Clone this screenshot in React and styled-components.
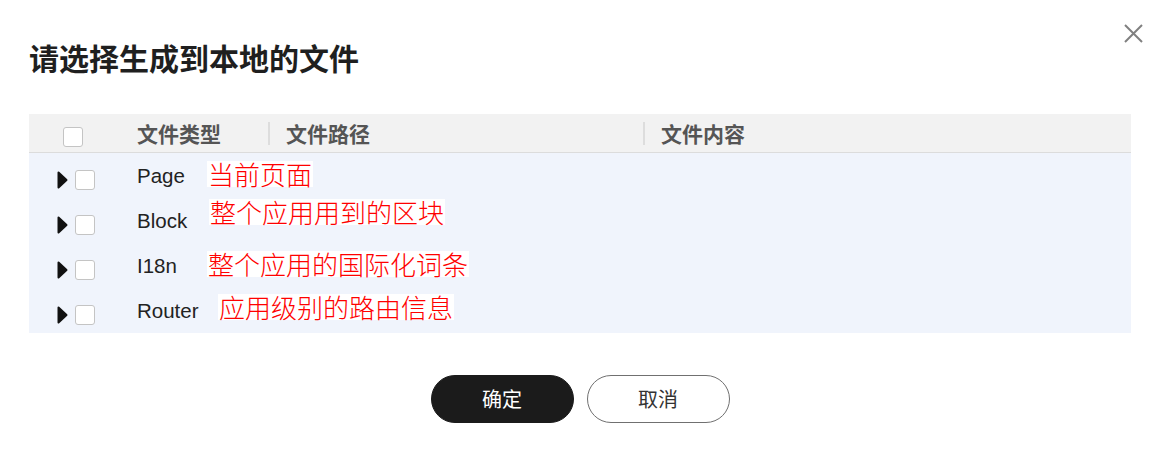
import React from 'react';
import styled, { createGlobalStyle } from 'styled-components';

const rows = [
  { type: 'Page', note: '当前页面', left: 178, top: 8 },
  { type: 'Block', note: '整个应用用到的区块', left: 180, top: 1 },
  { type: 'I18n', note: '整个应用的国际化词条', left: 178, top: 8 },
  { type: 'Router', note: '应用级别的路由信息', left: 189, top: 6 },
];

function App() {
  return (
    <>
      <GlobalStyle />
      <Dialog>
        <CloseButton aria-label="close">
          <svg width="19" height="19" viewBox="0 0 19 19">
            <path d="M1 1L18 18M18 1L1 18" stroke="#808080" strokeWidth="2" fill="none" />
          </svg>
        </CloseButton>
        <Title>请选择生成到本地的文件</Title>
        <Table>
          <HeadRow>
            <SelectHead>
              <Checkbox />
            </SelectHead>
            <HeadCell width="131px">文件类型</HeadCell>
            <HeadCell width="375px" divider>文件路径</HeadCell>
            <HeadCell divider>文件内容</HeadCell>
          </HeadRow>
          <Body>
            {rows.map(row =>
              <Row key={row.type}>
                <SelectCell>
                  <svg width="11" height="18" viewBox="0 0 11 18">
                    <path d="M1.5 1.5L9.5 9L1.5 16.5Z" fill="#111" stroke="#111" strokeWidth="2" strokeLinejoin="round" />
                  </svg>
                  <Checkbox />
                </SelectCell>
                <TypeCell>{row.type}</TypeCell>
                <Note left={row.left} top={row.top}>{row.note}</Note>
              </Row>
            )}
          </Body>
        </Table>
        <Footer>
          <Button primary>确定</Button>
          <Button>取消</Button>
        </Footer>
      </Dialog>
    </>
  );
}

export default App;

const GlobalStyle = createGlobalStyle`
  body {
    margin: 0;
    background: #fff;
    font-family: "Noto Sans CJK SC", "Noto Sans", sans-serif;
  }
`;

const Dialog = styled.div`
  position: relative;
  width: 1165px;
  box-sizing: border-box;
  padding: 36px 34px 26px 29px;
`;

const CloseButton = styled.button`
  all: unset;
  position: absolute;
  top: 24px;
  right: 22px;
  width: 19px;
  height: 19px;
  display: flex;
  cursor: pointer;
`;

const Title = styled.h1`
  margin: 0 0 36px;
  font-size: 30px;
  line-height: 42px;
  font-weight: 700;
  color: #1f1f1f;
`;

const Table = styled.div`
  width: 100%;
`;

const HeadRow = styled.div`
  display: flex;
  align-items: center;
  height: 38px;
  background: #f2f2f2;
  border-bottom: 1px solid #dcdcdc;
`;

const SelectHead = styled.div`
  width: 108px;
  flex-shrink: 0;
  box-sizing: border-box;
  padding: 8px 0 0 34px;
  display: flex;
  align-items: center;
`;

const HeadCell = styled.div`
  display: flex;
  align-items: center;
  width: ${p => p.width || 'auto'};
  flex: ${p => p.width ? '0 0 auto' : '1'};
  font-size: 21px;
  font-weight: 700;
  color: #555;
  &::before {
    content: '';
    display: ${p => p.divider ? 'block' : 'none'};
    width: 2px;
    height: 23px;
    margin-right: 16px;
    background: #dddddd;
  }
`;

const Checkbox = styled.span`
  display: inline-block;
  width: 20px;
  height: 20px;
  box-sizing: border-box;
  border: 1px solid #c4c4c4;
  border-radius: 3px;
  background: #fff;
`;

const Body = styled.div`
  background: #f0f4fc;
`;

const Row = styled.div`
  position: relative;
  display: flex;
  align-items: center;
  height: 45px;
`;

const SelectCell = styled.div`
  width: 108px;
  flex-shrink: 0;
  box-sizing: border-box;
  padding: 9px 0 0 28px;
  display: flex;
  align-items: center;
  gap: 7px;
`;

const TypeCell = styled.div`
  font-family: "Liberation Sans", Arial, sans-serif;
  font-size: 20.5px;
  color: #222;
`;

const Note = styled.span`
  position: absolute;
  left: ${p => p.left}px;
  top: ${p => p.top}px;
  padding: 0 1px;
  background: #fff;
  color: #ff0000;
  font-size: 26px;
  line-height: 26px;
  font-weight: 300;
  white-space: nowrap;
`;

const Footer = styled.div`
  display: flex;
  justify-content: center;
  gap: 13px;
  margin-top: 42px;
`;

const Button = styled.button`
  all: unset;
  box-sizing: border-box;
  width: 143px;
  height: 48px;
  border-radius: 24px;
  text-align: center;
  font-size: 20px;
  line-height: 46px;
  font-family: "Noto Sans CJK SC", sans-serif;
  background: ${p => p.primary ? '#1b1b1b' : '#fff'};
  color: ${p => p.primary ? '#fff' : '#333'};
  border: 1px solid ${p => p.primary ? '#1b1b1b' : '#707070'};
  cursor: pointer;
`;
